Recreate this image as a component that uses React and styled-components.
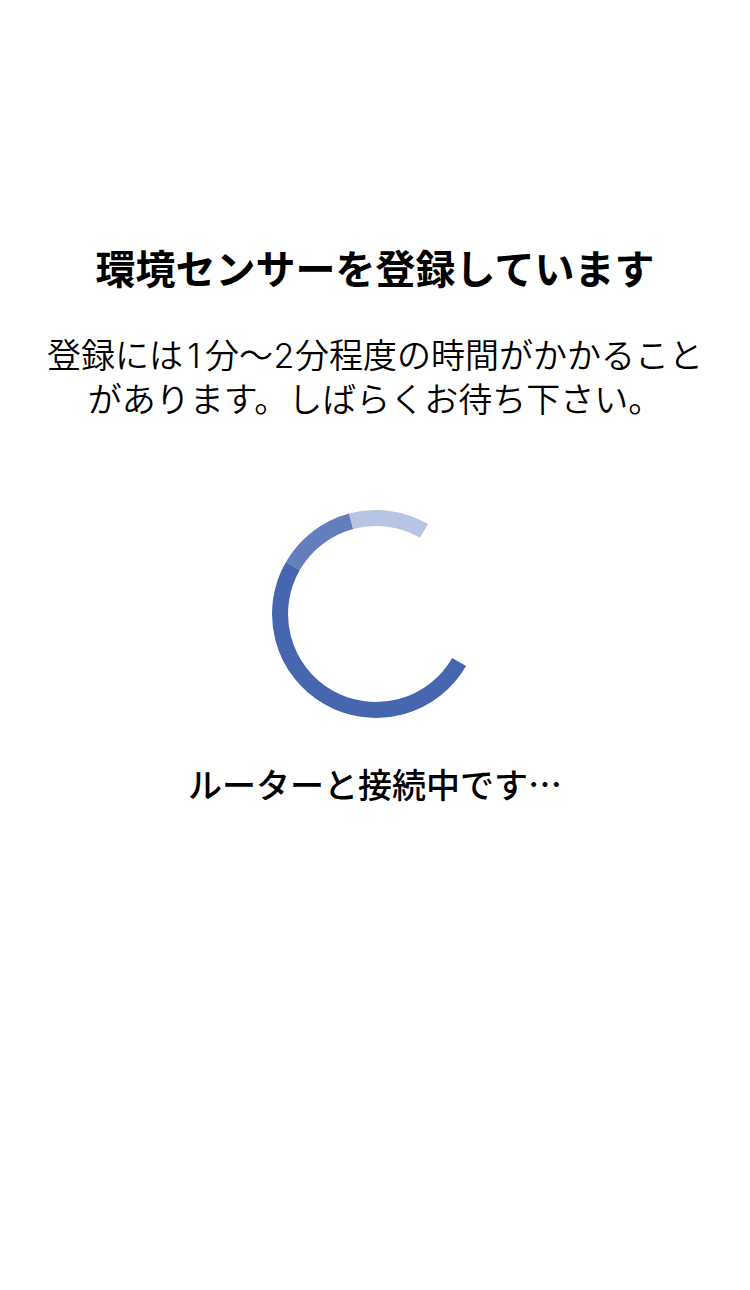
import React from "react";
import styled, { createGlobalStyle } from "styled-components";

const GlobalStyle = createGlobalStyle`
  body {
    margin: 0;
    background: #fff;
    color: #000;
    font-family: "Noto Sans CJK JP", sans-serif;
  }
`;

const Screen = styled.main`
  display: flex;
  flex-direction: column;
  align-items: center;
  box-sizing: border-box;
  min-height: 100vh;
  padding: 237px 40px 0;
  text-align: center;
`;

const Title = styled.h1`
  margin: 0;
  font-size: 40px;
  line-height: 60px;
  font-weight: 700;
`;

const Description = styled.p`
  margin: 37px 0 0;
  font-family: Inter, "Noto Sans CJK JP", sans-serif;
  font-size: 34px;
  line-height: 44px;
  font-weight: 350;
`;

const Digit = styled.span`
  display: inline-block;
  width: 22px;
`;

const Spinner = styled.svg`
  display: block;
  width: 210px;
  height: 208px;
  margin-top: 88px;
`;

const Status = styled.p`
  margin: 42px 0 0;
  font-size: 34px;
  line-height: 48px;
  font-weight: 500;
`;

export default function App() {
  return (
    <>
      <GlobalStyle />
      <Screen lang="ja">
        <Title>環境センサーを登録しています</Title>
        <Description>
          登録には<Digit>1</Digit>分〜<Digit>2</Digit>分程度の時間がかかること
          <br />
          があります。しばらくお待ち下さい。
        </Description>
        <Spinner viewBox="-106 -104 210 208" fill="none" strokeWidth="16" aria-hidden="true">
          <path d="M83.14 48A96 96 0 0 1-83.14-48" stroke="#4766b0" />
          <path d="M-83.14-48A96 96 0 0 1-24.85-92.73" stroke="#647ebd" />
          <path d="M-24.85-92.73A96 96 0 0 1 48-83.14" stroke="#b8c4e3" />
        </Spinner>
        <Status role="status">ルーターと接続中です…</Status>
      </Screen>
    </>
  );
}
